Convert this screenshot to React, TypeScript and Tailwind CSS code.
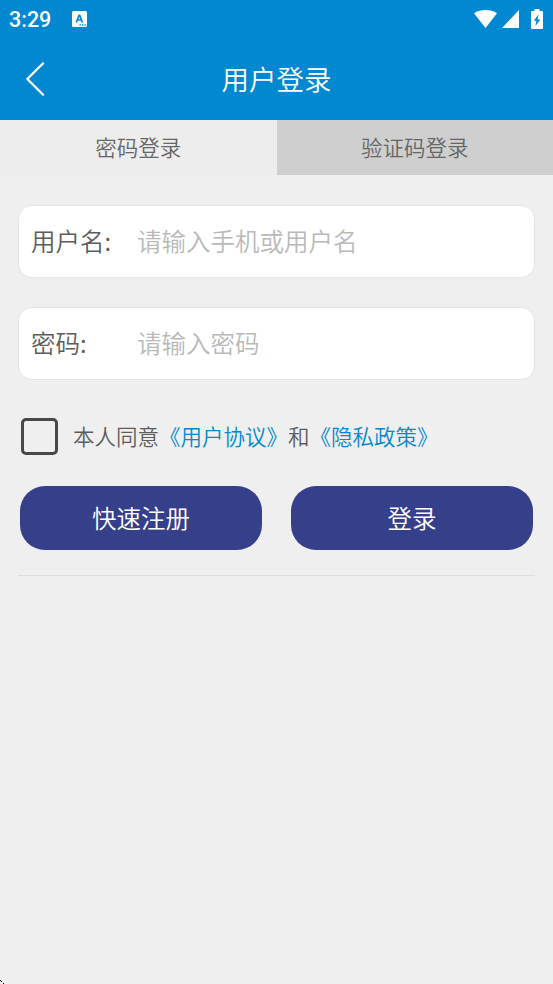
import { useState } from 'react';

type LoginTab = 'password' | 'code';

const tabs: { id: LoginTab; label: string }[] = [
  { id: 'password', label: '密码登录' },
  { id: 'code', label: '验证码登录' },
];

function StatusBar() {
  return (
    <div className="flex h-[38px] items-center justify-between pl-[9px] pr-[10px] text-white">
      <div className="flex items-center">
        <span className="w-[63px] pt-px font-[Roboto,sans-serif] text-[21.5px] leading-[38px] font-medium">3:29</span>
        {/* Input method indicator */}
        <svg className="h-4 w-[15px]" viewBox="0 0 15 16">
          <rect width="15" height="16" rx="1.6" fill="#fff" />
          <path d="M4.300 11.500 7 4.300h.7l2.700 7.200M5.300 9h4.100" fill="none" stroke="#0288d1" strokeWidth="1.7" />
          <path d="M7.500 14h1.300M10 14h1.300M12.400 14h1.300" stroke="#0288d1" strokeWidth="1.3" />
        </svg>
      </div>
      <div className="flex items-center">
        <svg className="h-[18px] w-[23px]" viewBox="0 0 23 18" fill="#fff">
          <path d="M0 3.300C6.400-1.100 16.600-1.100 23 3.300L11.500 18Z" />
        </svg>
        <svg className="ml-[5px] h-[18px] w-[17px]" viewBox="0 0 17 18" fill="#fff">
          <path d="M17 0v18H0Z" />
        </svg>
        <svg className="ml-3 h-5 w-3" viewBox="0 0 12 20">
          <path d="M3.500 0h5v2H11q1 0 1 1v16q0 1-1 1H1q-1 0-1-1V3q0-1 1-1h2.500Z" fill="#fff" />
          <path d="M7.600 5.300 2.700 11.700h2.700l-.9 5.200 4.900-6.500H6.600Z" fill="#0288d1" />
        </svg>
      </div>
    </div>
  );
}

interface FieldProps {
  label: string;
  placeholder: string;
  type: string;
}

function Field({ label, placeholder, type }: FieldProps) {
  return (
    <label className="flex h-[73px] items-center rounded-[14px] border border-[#e5e5e5] bg-white pl-3 text-[24.5px]">
      <span className="w-[106px] shrink-0 text-[#5c5c5c]">{label}</span>
      <input
        type={type}
        placeholder={placeholder}
        className="mb-[2px] h-10 min-w-0 flex-1 bg-transparent text-[#555] outline-none placeholder:text-[#b9b9b9]"
      />
    </label>
  );
}

export default function App() {
  const [activeTab, setActiveTab] = useState<LoginTab>('password');
  const [agreed, setAgreed] = useState(false);

  return (
    <div
      lang="zh-CN"
      className="relative h-[984px] w-full overflow-hidden bg-[#efefef] font-['Noto_Sans_CJK_SC',sans-serif] font-[350]"
    >
      <header className="h-[120px] bg-[#0288d1]">
        <StatusBar />
        <div className="grid h-[82px] grid-cols-[80px_1fr_80px] items-center text-white">
          <button className="pl-[26px]" aria-label="返回">
            <svg className="block h-[34px] w-[19px]" viewBox="0 0 19 34" fill="none" stroke="#fff" strokeWidth="2.2">
              <path d="M17.700.700 1.400 17l16.300 16.300" />
            </svg>
          </button>
          <h1 className="pb-[2px] text-center text-[27.500px] leading-[40px]">用户登录</h1>
        </div>
      </header>

      {/* Login method tabs */}
      <div className="grid h-[55px] grid-cols-2">
        {tabs.map((tab) => (
          <button
            key={tab.id}
            onClick={() => setActiveTab(tab.id)}
            className={`text-[21.5px] text-[#666] ${activeTab === tab.id ? 'bg-[#ededed]' : 'bg-[#cfcfcf]'}`}
          >
            {tab.label}
          </button>
        ))}
      </div>

      <form className="px-[18px] pt-[30px]" onSubmit={(e) => e.preventDefault()}>
        <div className="flex flex-col gap-[29px]">
          <Field label="用户名:" placeholder="请输入手机或用户名" type="text" />
          <Field label="密码:" placeholder="请输入密码" type="password" />
        </div>

        {/* Agreement */}
        <div className="mt-[38px] flex h-[37px] items-center pl-[3px] text-[21.5px] text-[#5c5c5c]">
          <button
            type="button"
            role="checkbox"
            aria-checked={agreed}
            aria-label="同意"
            onClick={() => setAgreed(!agreed)}
            className={`mr-[15px] size-[37px] rounded-[5px] border-[3px] border-[#484848] ${agreed ? 'bg-[#0288d1]' : ''}`}
          />
          <span>本人同意</span>
          <span className="text-[#0288d1]">《用户协议》</span>
          <span>和</span>
          <span className="text-[#0288d1]">《隐私政策》</span>
        </div>

        <div className="mt-[31px] grid grid-cols-2 gap-[29px] pr-[2px] pl-[2px] text-[24.5px] text-white">
          <button type="button" className="h-16 rounded-[25px] bg-[#36408a]">快速注册</button>
          <button type="submit" className="h-16 rounded-[25px] bg-[#36408a]">登录</button>
        </div>

        <hr className="mt-[25px] border-[#dcdcdc]" />
      </form>

      {/* Corner mark at the bottom edge */}
      <svg className="absolute bottom-0 left-0 size-[4px]" viewBox="0 0 4 4" fill="#000" shapeRendering="crispEdges">
        <path d="M0 0h1v1H0zM1 1h1v1H1zM3 3h1v1H3z" />
      </svg>
    </div>
  );
}
